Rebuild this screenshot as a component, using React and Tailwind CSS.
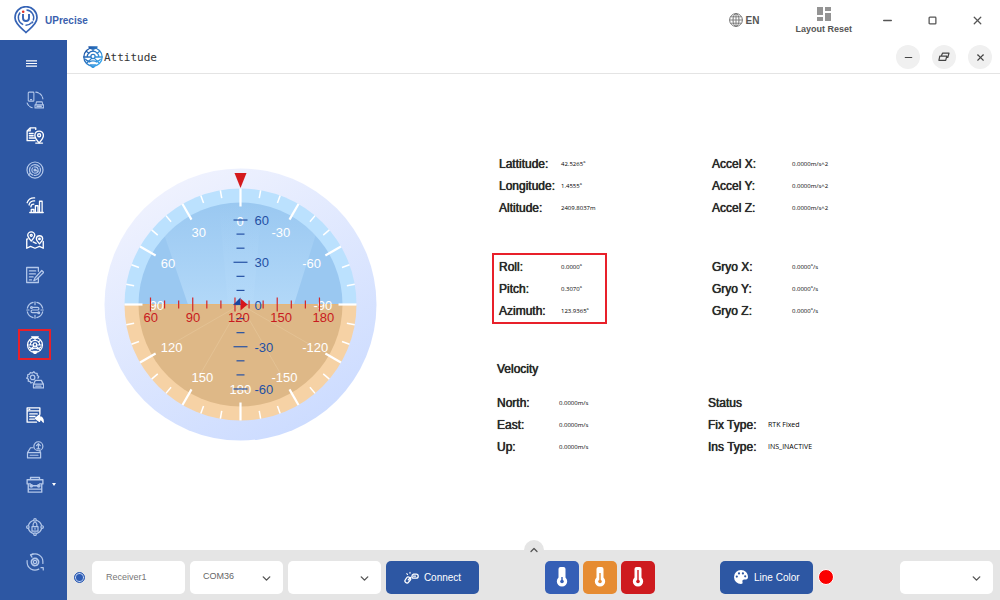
import React from "react";
import { ChevronDown, ChevronUp, Minus, Square, X } from "lucide-react";

const DIM = "text-[#b4c8ea]";
const BRIGHT = "text-white";

function Icon({ children, size = 18, stroke = 1.5 }) {
  return (
    <svg width={size} height={size} viewBox="0 0 24 24" fill="none" stroke="currentColor" strokeWidth={stroke} strokeLinecap="round" strokeLinejoin="round" aria-hidden="true">
      {children}
    </svg>
  );
}

const AttitudeIcon = ({ size = 18, stroke = 1.6, paint = "currentColor" }) => (
  <svg width={size} height={size} viewBox="0 0 24 24" fill="none" stroke={paint} strokeWidth={stroke} strokeLinecap="round" strokeLinejoin="round" aria-hidden="true">
    <defs>
      <linearGradient id="attitudeBlue" gradientUnits="userSpaceOnUse" x1="2" y1="4" x2="22" y2="20">
        <stop offset="0" stopColor="#1c4fa0" />
        <stop offset="1" stopColor="#3fb0f5" />
      </linearGradient>
    </defs>
    <path d="M7.500 1h9L14 3h-4zM10 22.200h4l-2 1.500z" fill={paint} />
    <circle cx="12" cy="12" r="10" />
    <path d="M5.700 12a6.300 6.300 0 0 1 12.600 0M2 12h7.500M14.500 12H22" />
    <circle cx="12" cy="11.500" r="2.300" />
    <path d="M10.500 13.500L5 18.800M13.500 13.500l5.500 5.300M4 14.500c1 1.500 2.500 2 4 1.800M20 14.500c-1 1.500-2.500 2-4 1.800M8 17.500c2.500-1.500 5.500-1.500 8 0M9 20.500h6M12 3v2.700M5 6l2.500 2M19 6l-2.500 2" />
  </svg>
);

const navItems = [
  {
    label: "Devices", tone: DIM,
    icon: <Icon stroke={1.4}>
      <rect x="3" y="1.500" width="7.500" height="12" rx="1" />
      <path d="M6 11.500h1.500M13 1.500a10.500 10.500 0 0 1 9.500 9M1.500 16a10.500 10.500 0 0 0 8 6.500" strokeDasharray="4 1.500" />
      <path d="M14 14.500h7.500l1 4h-9.500zM12 18.500h11.500v4H12zM14.500 20.500h6" />
    </Icon>,
  },
  {
    label: "Position report", tone: BRIGHT,
    icon: <Icon stroke={1.8}>
      <path d="M12 19.500H1.500V6.500L5.500 2.500H13v2M5.500 2.500v4h-4M4.500 10h5M4.500 13h5M4.500 16h7" />
      <path d="M17.500 22.500c-3.500-4-5.700-7-5.700-10a5.700 5.700 0 0 1 11.400 0c0 3-2.200 6-5.700 10z" />
      <circle cx="17.500" cy="12.300" r="2" />
      <path d="M13 22.800h9" />
    </Icon>,
  },
  {
    label: "Sky view", tone: DIM,
    icon: <Icon stroke={1.6}>
      <circle cx="12" cy="12" r="10.700" />
      <circle cx="12" cy="12" r="7.300" strokeDasharray="12 2" />
      <circle cx="12" cy="12" r="4.200" strokeDasharray="7 2" />
      <circle cx="12" cy="12" r="1.300" fill="currentColor" />
      <path d="M12 12l4 2M5 17l-1.500 1.500" />
    </Icon>,
  },
  {
    label: "Signal", tone: BRIGHT,
    icon: <Icon stroke={1.7}>
      <path d="M1.500 9a10 10 0 0 1 10-6.500M4 12a7 7 0 0 1 7.500-5.500M6.500 14.500a4 4 0 0 1 4-3.800" />
      <path d="M7 22v-4h3.500v4M12.500 22v-9H16v9M18 22V7h3.500v15M5 22h18" />
    </Icon>,
  },
  {
    label: "Map", tone: BRIGHT,
    icon: <Icon stroke={1.8}>
      <path d="M7 13.500C4 10 2.300 8 2.300 5.800a4.700 4.700 0 0 1 9.400 0c0 2.200-1.700 4.200-4.700 7.700zM18 17c-2.500-3-4.200-4.500-4.200-6.500a4.200 4.200 0 0 1 8.400 0c0 2-1.700 3.500-4.200 6.500z" />
      <circle cx="7" cy="5.800" r="1.300" />
      <circle cx="18" cy="10.500" r="1" />
      <path d="M2.500 10.500L1 11v12l5-2.500 6 2.500 6-2.500 5 2.500V14M9.500 14.500l4 2" />
    </Icon>,
  },
  {
    label: "Log", tone: DIM,
    icon: <Icon stroke={1.7}>
      <path d="M16.500 16v6H.900V2h15.600v5M4.500 6.500h8.500M4.500 10.500h8M4.500 14.500h5M4.500 18.500h3" />
      <path d="M21 6l2.500 2.500L14 18l-3.500 1.500L12 16z" />
    </Icon>,
  },
  {
    label: "Target", tone: DIM,
    icon: <Icon stroke={1.6}>
      <path d="M14.500 1.800a10.500 10.500 0 0 1 7.700 7.700M22.200 14.500a10.500 10.500 0 0 1-7.700 7.700M9.500 22.200a10.500 10.500 0 0 1-7.700-7.700M1.800 9.500a10.500 10.500 0 0 1 7.700-7.700" />
      <path d="M12 1v4M12 19v4M1 12h3M20 12h3M8.500 8.500h7a1.700 1.700 0 0 1 0 3.500h-7a1.700 1.700 0 0 0 0 3.500h8" />
      <circle cx="7.300" cy="8.500" r="1.200" />
      <circle cx="17" cy="15.500" r="1.200" />
    </Icon>,
  },
  { label: "Attitude", tone: BRIGHT, active: true, icon: <AttitudeIcon /> },
  {
    label: "Device settings", tone: DIM,
    icon: <Icon stroke={1.7}>
      <path d="M8.500 15.500l-2 .5-1-2-2.500-.500.300-2.500L1 9.500l1.500-2L2.200 5l2.500-.800L5.800 2l2.500.700L10.500 1l1.700 1.900 2.600.300.200 2.600 2 1.700-1 2" />
      <circle cx="8.800" cy="8.500" r="3" />
      <path d="M12.500 12.500h8l2.500 5H10zM10 17.500h13.500v5H10zM13 20.200h7" />
    </Icon>,
  },
  {
    label: "Console", tone: BRIGHT,
    icon: <Icon stroke={1.8}>
      <path d="M14 21.500H1.500V2.500h17V11M1.500 6.500h17M4 4.500h1M5 10.500h10M5 14h7M5 17.500h6" />
      <path d="M18 12l-5.500 4.500 5.500 4v-2.500c2.500 0 4 .700 5 3.500 0-4.500-1.500-7-5-7z" fill="currentColor" />
    </Icon>,
  },
  {
    label: "Firmware upgrade", tone: DIM,
    icon: <Icon stroke={1.6}>
      <circle cx="16.500" cy="7" r="6" />
      <path d="M16.500 10.500V4M14 6.200L16.500 3.500 19 6.200M14.500 10.500h4" />
      <path d="M9.500 9H6l-4 6.500M2 15.500h17.500v7H2zM5.500 19h10.500M19.500 15.500l-1-2" />
    </Icon>,
  },
  {
    label: "Tools", tone: DIM, menu: true,
    icon: <Icon stroke={1.8}>
      <path d="M6 4.500V2h12v2.500M1.500 5h21v5.500H18M6 10.500H1.500V5M3 11v10.500h18V11M3 17.500h18M8 13h8" />
      <circle cx="7" cy="13" r="1.600" fill="currentColor" />
      <circle cx="17" cy="13" r="1.600" fill="currentColor" />
    </Icon>,
  },
  {
    label: "Authorization", tone: DIM, gapBefore: true,
    icon: <Icon stroke={1.6}>
      <circle cx="12" cy="12" r="9" />
      <circle cx="12" cy="2.500" r="1.700" fill="#2d57a3" />
      <circle cx="12" cy="21.500" r="1.700" fill="#2d57a3" />
      <circle cx="2.500" cy="12" r="1.700" fill="#2d57a3" />
      <circle cx="21.500" cy="12" r="1.700" fill="#2d57a3" />
      <path d="M8 11.500h8v6H8zM9.500 11V8.500a2.500 2.500 0 0 1 5 0V11M12 13.500v1.500" />
    </Icon>,
  },
  {
    label: "Update settings", tone: DIM,
    icon: <Icon stroke={1.6}>
      <path d="M7 2.500A10.500 10.500 0 0 1 22.500 12v2M17 21.500A10.500 10.500 0 0 1 1.500 12v-2" />
      <path d="M9.500 1L6 2.500l2 3M20 19.500h3v3" />
      <circle cx="12" cy="12" r="2.200" />
      <circle cx="12" cy="12" r="4.800" strokeDasharray="2.600 1.200" strokeWidth="2.200" />
    </Icon>,
  },
];

function Logo() {
  return (
    <svg width="24" height="28" viewBox="0 0 24 28" fill="none" stroke="#3563b5" aria-hidden="true">
      <path d="M12 26.500C9.500 23.500 1 18.500 1 11.700a11 11 0 0 1 22 0C23 18.500 14.500 23.500 12 26.500z" strokeWidth="1.700" strokeLinejoin="round" />
      <path d="M6.200 6.500a7.700 7.700 0 0 0 3 12.200M12.500 4a7.700 7.700 0 0 1 6.700 10.500M11.500 19.300a7.700 7.700 0 0 0 6-2.500" strokeWidth="1.400" />
      <path d="M9 8v4a3 3 0 0 0 6 0V8" strokeWidth="1.900" />
      <circle cx="9.200" cy="5.700" r="1.300" fill="#e0342b" stroke="none" />
      <circle cx="18.300" cy="16.300" r="1.100" fill="#3563b5" stroke="none" />
    </svg>
  );
}

function TopBar() {
  return (
    <header className="flex h-10 items-center bg-white pl-[14px] text-[#555]">
      <Logo />
      <span className="ml-[7px] text-[10px] font-bold text-[#3a5fae]">UPrecise</span>
      <button className="ml-auto flex items-center gap-[3px] text-[10px] font-bold">
        <svg width="14" height="14" viewBox="0 0 14 14" fill="none" stroke="#777" aria-hidden="true">
          <circle cx="7" cy="7" r="6.400" />
          <ellipse cx="7" cy="7" rx="3" ry="6.400" />
          <path d="M7 .600v12.800M.600 7h12.800M1.500 3.800h11M1.500 10.200h11" strokeWidth="0.900" />
        </svg>
        EN
      </button>
      <button className="mr-[13px] ml-9 flex flex-col items-center gap-[3px] text-[9px] leading-[10px] font-bold">
        <svg width="14" height="14" viewBox="0 0 14 14" fill="#949494" aria-hidden="true">
          <path d="M0 0h6v8H0zM8 0h6v4H8zM0 10h6v4H0zM8 6h6v8H8z" />
        </svg>
        Layout Reset
      </button>
      <button aria-label="Minimize" className="flex w-[45px] justify-center"><Minus size={13} strokeWidth={2.6} /></button>
      <button aria-label="Maximize" className="flex w-[45px] justify-center"><Square size={9} strokeWidth={3.4} /></button>
      <button aria-label="Close" className="flex w-[45px] justify-center"><X size={13} strokeWidth={2.4} /></button>
    </header>
  );
}

function Sidebar() {
  return (
    <nav className="flex w-[67px] shrink-0 flex-col bg-[#2d57a3]">
      <button aria-label="Menu" className="flex h-[42px] items-center pt-1 pl-[26px] text-white">
        <svg width="11" height="7" viewBox="0 0 11 7" stroke="currentColor" strokeWidth="1.200" aria-hidden="true">
          <path d="M0 .900h11M0 3.500h11M0 6.100h11" />
        </svg>
      </button>
      {navItems.map((item) => (
        <div key={item.label} className={item.gapBefore ? "mt-[7px] flex h-[35px] items-center" : "flex h-[35px] items-center"}>
          <button
            aria-label={item.label}
            className={`ml-[18px] flex h-[31px] w-[33px] items-center justify-center ${item.tone} ${item.active ? "border-2 border-[#e8202a]" : ""}`}
          >
            {item.icon}
          </button>
          {item.menu && (
            <svg width="4" height="3" viewBox="0 0 4 3" className="ml-[1px]" aria-hidden="true">
              <path d="M0 0h4L2 3z" fill="#fff" />
            </svg>
          )}
        </div>
      ))}
    </nav>
  );
}

const CENTER = 136.5;

function polar(radius, degrees) {
  const a = (degrees * Math.PI) / 180;
  return [CENTER - radius * Math.sin(a), CENTER - radius * Math.cos(a)];
}

function rollLabelX(x, degrees) {
  if (degrees === 0) return x - 4;
  if (degrees === 180) return x - 11;
  return degrees > 0 ? x - 7 : x - 11;
}

function AttitudeIndicator() {
  const rollTicks = Array.from({ length: 36 }, (_, i) => i * 10);
  const rollLabels = [0, 30, 60, 90, 120, 150, 180, -30, -60, -90, -120, -150];
  const pitchTicks = Array.from({ length: 13 }, (_, i) => 60 - i * 10);
  const headingTicks = Array.from({ length: 13 }, (_, i) => 60 + i * 10);
  const c = CENTER;
  return (
    <svg width="273" height="273" viewBox="0 0 273 273" className="shrink-0 font-['Liberation_Sans',Arial,sans-serif] text-[13px]" role="img" aria-label="Attitude indicator">
      <defs>
        <linearGradient id="rim" x1="0.200" y1="0" x2="0.750" y2="1">
          <stop offset="0" stopColor="#f1f3fe" />
          <stop offset="1" stopColor="#cbdbff" />
        </linearGradient>
        <linearGradient id="beam" x1="0" y1="0" x2="0" y2="1">
          <stop offset="0" stopColor="#b8dcfa" stopOpacity="0" />
          <stop offset="1" stopColor="#b8dcfa" stopOpacity="0.800" />
        </linearGradient>
      </defs>
      <circle cx={c} cy={c} r="136" fill="url(#rim)" />
      <path d={`M${c - 116} ${c}a116 116 0 0 1 232 0z`} fill="#bbe1fe" />
      <path d={`M${c - 116} ${c}a116 116 0 0 0 232 0z`} fill="#f6d2a5" />
      <path d={`M${c - 102} ${c}a102 102 0 0 1 204 0z`} fill="#9ac8f1" />
      <path d={`M${c - 102} ${c}a102 102 0 0 0 204 0z`} fill="#deb887" />
      <path d="M84 136.500L60 66Q136 2 212 66L190 136.500z" fill="url(#beam)" />
      <path d="M124 136.500L115 37Q136 33 158 37L149 136.500z" fill="url(#beam)" opacity="0.400" />
      {[120, 150, 210, 240].map((d) => {
        const [x, y] = polar(84, d);
        return <line key={d} x1={c} y1={c} x2={x} y2={y} stroke="#e5c497" strokeWidth="0.800" />;
      })}
      <path d={`M${c - 102} ${c}h204`} stroke="#e6b67a" />
      {rollTicks.map((d) => {
        const major = d % 30 === 0;
        const [x1, y1] = polar(116, d);
        const [x2, y2] = polar(major ? 98 : 108, d);
        return <line key={d} x1={x1} y1={y1} x2={x2} y2={y2} stroke="#fff" strokeWidth={major ? 2.2 : 1.5} />;
      })}
      {rollLabels.map((d) => {
        const [x, y] = polar(84, d);
        return <text key={d} x={rollLabelX(x, d)} y={y + 5} fill="#fff">{d}</text>;
      })}
      {pitchTicks.map((p) => {
        const y = c - p * 1.408;
        const half = p % 30 === 0 ? 7 : 4;
        return <line key={p} x1={c - half} y1={y} x2={c + half} y2={y} stroke="#2450a4" strokeWidth="1.200" />;
      })}
      {[60, 30, 0, -30, -60].map((p) => (
        <text key={p} x={c + 14} y={c - p * 1.408 + 5} fill="#2450a4">{p}</text>
      ))}
      {headingTicks.map((h) => {
        const x = 46.500 + (h - 60) * 1.408;
        const half = h % 30 === 0 ? 7 : 4;
        return <line key={h} x1={x} y1={c - half} x2={x} y2={c + half} stroke="#d2262a" strokeWidth="1.200" />;
      })}
      {[60, 90, 120, 150, 180].map((h) => (
        <text key={h} x={39.500 + (h - 60) * 1.408} y={c + 17.5} fill="#c81a20">{h}</text>
      ))}
      <path d={`M${c - 7} ${c}L${c} ${c - 7}V${c}z`} fill="#1a459f" />
      <path d={`M${c} ${c - 6}L${c + 7} ${c}L${c} ${c + 6}z`} fill="#d6141c" />
      <path d={`M${c - 6} 5h12l-6 15z`} fill="#d41a1d" />
    </svg>
  );
}

function Row({ label, value, wide, valueSize }) {
  return (
    <div className="flex h-[22px] items-center">
      <dt className={`${wide} shrink-0 [text-shadow:0_0_0_#222,0_0_1px_#666]`}>{label}</dt>
      <dd className={`font-['Open_Sans','Noto_Sans',sans-serif] text-black ${valueSize}`}>{value}</dd>
    </div>
  );
}

function Group({ rows, wide, valueSize = "text-[6px]", className = "" }) {
  return (
    <dl className={className}>
      {rows.map(([label, value]) => <Row key={label} label={label} value={value} wide={wide} valueSize={valueSize} />)}
    </dl>
  );
}

function Readings() {
  return (
    <div className="mt-[79px] grid grid-cols-[216px_auto] items-start gap-y-[34px] text-[12px] text-[#2a2a2a]">
      <Group className="pl-[7px]" wide="w-[62px]" rows={[["Lattitude:", "42.5265º"], ["Longitude:", "1.4555º"], ["Altitude:", "2409.8037m"]]} />
      <Group className="pl-1" wide="w-20" rows={[["Accel X:", "0.0000m/s^2"], ["Accel Y:", "0.0000m/s^2"], ["Accel Z:", "0.0000m/s^2"]]} />
      <Group className="w-[115px] border-2 border-[#e8202a] pt-px pl-[5px]" wide="w-[62px]" rows={[["Roll:", "0.0000º"], ["Pitch:", "0.3070º"], ["Azimuth:", "123.9365º"]]} />
      <Group className="pt-[3px] pl-1" wide="w-20" rows={[["Gryo X:", "0.0000º/s"], ["Gryo Y:", "0.0000º/s"], ["Gryo Z:", "0.0000º/s"]]} />
      <section className="pl-[5px]">
        <h2 className="mb-3 leading-[22px] [text-shadow:0_0_0_#222,0_0_1px_#666]">Velocity</h2>
        <Group wide="w-[62px]" rows={[["North:", "0.0000m/s"], ["East:", "0.0000m/s"], ["Up:", "0.0000m/s"]]} />
      </section>
      <section className="pt-[34px]">
        <h2 className="leading-[22px] [text-shadow:0_0_0_#222,0_0_1px_#666]">Status</h2>
        <Group wide="w-[60px]" valueSize="text-[7px]" rows={[["Fix Type:", "RTK Fixed"], ["Ins Type:", "INS_INACTIVE"]]} />
      </section>
    </div>
  );
}

function PanelButton({ label, children }) {
  return (
    <button aria-label={label} className="flex size-6 items-center justify-center rounded-full bg-[#f0f0f0] text-[#444]">
      {children}
    </button>
  );
}

function PanelHeader() {
  return (
    <div className="flex h-[34px] items-center border-b border-[#e4e4e4] pt-px pr-2 pl-[15px]">
      <AttitudeIcon size={22} stroke={1.4} paint="url(#attitudeBlue)" />
      <h1 className="pt-[2px] font-['DejaVu_Sans_Mono',monospace] text-[11px] text-[#333]">Attitude</h1>
      <div className="ml-auto flex gap-3">
        <PanelButton label="Minimize panel"><Minus size={11} strokeWidth={2.6} /></PanelButton>
        <PanelButton label="Restore panel">
          <svg width="12" height="10" viewBox="0 0 12 10" fill="none" stroke="currentColor" strokeWidth="1.200" strokeLinejoin="round" aria-hidden="true">
            <path d="M3.500 3.500L4.500 1.200H11L9.800 5.500H8.500M1.800 4.200h7L7.700 8.300H.900z" />
          </svg>
        </PanelButton>
        <PanelButton label="Close panel"><X size={11} strokeWidth={2.4} /></PanelButton>
      </div>
    </div>
  );
}

function SelectBox({ label, value }) {
  return (
    <div className="relative">
      <select aria-label={label} defaultValue={value} className="block h-[33px] w-[93px] appearance-none rounded-[5px] bg-white pl-[13px] text-[9px] text-[#666]">
        <option value={value}>{value}</option>
      </select>
      <ChevronDown size={13} strokeWidth={2.6} className="pointer-events-none absolute top-[11px] right-[10px] text-[#555]" />
    </div>
  );
}

function ThermButton({ label, color, level }) {
  return (
    <button aria-label={label} className={`flex h-[33px] w-[34px] items-center justify-center rounded-[5px] ${color}`}>
      <svg width="12" height="20" viewBox="0 0 12 20" fill="none" aria-hidden="true">
        <path d="M2.500 2a2 2 0 0 1 2-2h3a2 2 0 0 1 2 2v8.500a5.200 5.200 0 1 1-7 0z" fill="#fff" />
        <path d={`M6 ${level}V14`} stroke="currentColor" strokeWidth="1.400" />
        <circle cx="6" cy="14.500" r="1.800" fill="currentColor" />
      </svg>
    </button>
  );
}

function BottomBar() {
  return (
    <footer className="relative flex h-[50px] items-center justify-between bg-[#e5e5e5] px-[7px] pt-1">
      <button aria-label="Collapse toolbar" className="absolute -top-[10px] left-1/2 flex size-5 -translate-x-1/2 items-center justify-center rounded-full bg-[#e5e5e5] text-[#555]">
        <ChevronUp size={12} strokeWidth={2.6} />
      </button>
      <div className="flex items-center gap-[5px]">
        <input type="radio" name="receiver" defaultChecked aria-label="Use Receiver1" className="mr-[2px] size-[11px] appearance-none rounded-full border border-[#2d5cb4] bg-[#2d5cb4] shadow-[inset_0_0_0_1px_#c9d8f4]" />
        <input type="text" aria-label="Receiver name" defaultValue="Receiver1" className="h-[33px] w-[93px] rounded-[5px] bg-white px-[14px] text-[9px] text-[#777]" />
        <SelectBox label="Port" value="COM36" />
        <SelectBox label="Baud rate" value="" />
        <button className="flex h-[33px] w-[93px] items-center justify-center gap-[5px] rounded-[5px] bg-[#2d57a3] text-[10px] text-white">
          <svg width="15" height="13" viewBox="0 0 15 13" fill="none" stroke="#fff" strokeWidth="1.500" strokeLinecap="round" aria-hidden="true">
            <path d="M5.200 6.300a1.500 1.500 0 0 0-2.300.200L1.400 8.700a2 2 0 0 0 3.200 2.500L6.300 9a1.500 1.500 0 0 0-.100-2M9.500 3.200h2.700a2 2 0 0 1 0 4H9.500a1.500 1.500 0 0 1-1.500-2 2 2 0 0 1 1.500-2M4.300 8.800L6.500 6.500M9.500 5.200h2" strokeWidth="1.300" />
            <path d="M3.500 3.500L2.800 2.700M6 2.200V1.200" strokeWidth="1.100" />
          </svg>
          Connect
        </button>
      </div>
      <div className="flex gap-1">
        <ThermButton label="Cold start" color="bg-[#355fb6] text-[#355fb6]" level={10} />
        <ThermButton label="Warm start" color="bg-[#e68c32] text-[#e68c32]" level={6} />
        <ThermButton label="Hot start" color="bg-[#ce1b1f] text-[#ce1b1f]" level={3} />
      </div>
      <div className="flex items-center gap-[5px]">
        <button className="flex h-[33px] w-[93px] items-center justify-center gap-[6px] rounded-[5px] bg-[#2d57a3] text-[10px] text-white">
          <svg width="14" height="14" viewBox="0 0 14 14" aria-hidden="true">
            <path d="M7 0a7 7 0 1 0 0 14c1.300 0 1.900-1 1.500-2-.500-1.500.300-2.600 1.800-2.600h1.700c1.200 0 2-.900 2-2.400C14 3 11 0 7 0z" fill="#fff" />
            <g fill="#2d57a3">
              <circle cx="2.800" cy="6.600" r="1.100" />
              <circle cx="5" cy="3.400" r="1.100" />
              <circle cx="8.900" cy="3.400" r="1.100" />
              <circle cx="11.200" cy="6.300" r="1.100" />
            </g>
          </svg>
          Line Color
        </button>
        <span className="size-4 rounded-full border border-white bg-[#fb0000]" />
      </div>
      <SelectBox label="Output" value="" />
    </footer>
  );
}

export default function App() {
  return (
    <div className="flex min-h-screen flex-col bg-white font-['Liberation_Sans',Arial,sans-serif]">
      <TopBar />
      <div className="flex flex-1">
        <Sidebar />
        <main className="flex min-w-0 flex-1 flex-col">
          <PanelHeader />
          <div className="flex flex-1 items-start gap-[115px] pl-[37px]">
            <div className="mt-[94px] shrink-0"><AttitudeIndicator /></div>
            <Readings />
          </div>
          <BottomBar />
        </main>
      </div>
    </div>
  );
}
